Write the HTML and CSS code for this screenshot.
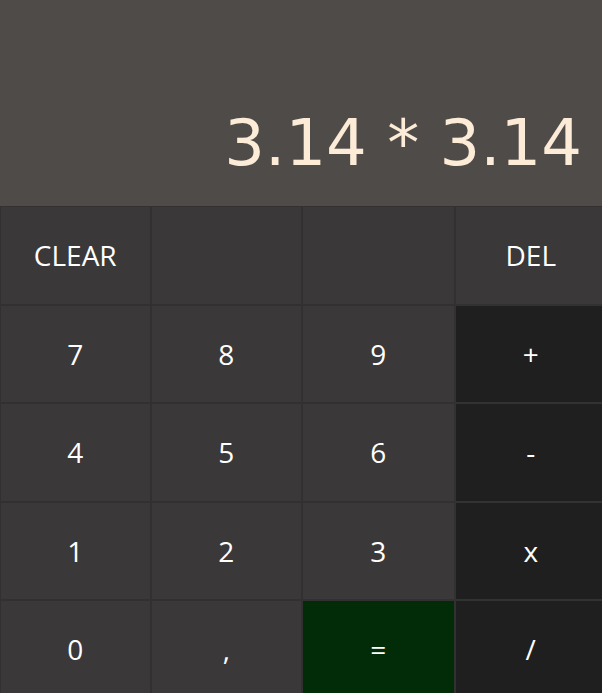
FILE: index.html
```html
<!DOCTYPE html>
<html>
<head>
<meta charset="utf-8">
<link rel="stylesheet" href="styles.css">
</head>
<body>
<div class="calc">
  <div class="display"><span class="expr">3.14 * 3.14</span></div>
  <div class="keys">
    <button class="key">CLEAR</button>
    <button class="key"></button>
    <button class="key"></button>
    <button class="key">DEL</button>
    <button class="key">7</button>
    <button class="key">8</button>
    <button class="key">9</button>
    <button class="key op">+</button>
    <button class="key">4</button>
    <button class="key">5</button>
    <button class="key">6</button>
    <button class="key op">-</button>
    <button class="key">1</button>
    <button class="key">2</button>
    <button class="key">3</button>
    <button class="key op">x</button>
    <button class="key">0</button>
    <button class="key">,</button>
    <button class="key eq">=</button>
    <button class="key op">/</button>
  </div>
</div>
</body>
</html>
```

FILE: styles.css
```css
* { box-sizing: border-box; }
html, body { margin: 0; padding: 0; background: #3a3839; overflow: hidden; }
.calc { width: 602px; }
.display {
  height: 206px;
  background: #4f4b49;
  display: flex;
  justify-content: flex-end;
  align-items: flex-end;
  padding: 0 20px 31px 0;
}
.expr {
  font-family: "DejaVu Sans", sans-serif;
  font-size: 64px;
  line-height: 1;
  color: #fcebd7;
  white-space: pre;
}
.keys {
  display: grid;
  width: 607px;
  grid-template-columns: 150.5px 151.5px 152.5px 152.5px;
  grid-auto-rows: 98.5px;
}
.key {
  margin: 0;
  border: 1px solid #323031;
  background: #3a3839;
  color: #ffffff;
  font-family: "Open Sans", sans-serif;
  font-size: 28px;
  padding: 0;
  display: flex;
  align-items: center;
  justify-content: center;
}
.key.op { background: #1f1f1f; border-color: #333233; }
.key.eq { background: #012c07; border-color: #323031; }
```
